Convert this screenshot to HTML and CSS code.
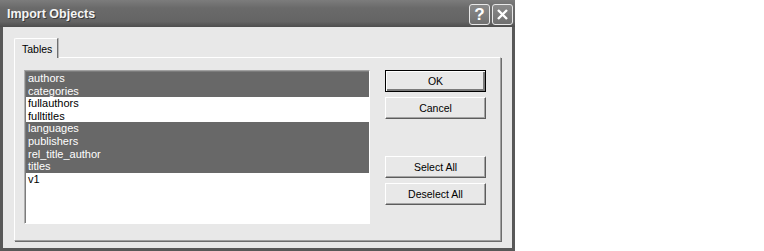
FILE: index.html
```html
<!doctype html>
<html lang="en">

<head>
	<meta charset="UTF-8">
	<title>Import Objects</title>
	<link rel="stylesheet" href="styles.css">
</head>

<body>
	<div class="dialog">
		<div class="titlebar">
			<span class="title">Import Objects</span>
			<div class="caption-btns">
				<span class="cbtn help">?</span>
				<span class="cbtn close">
					<svg width="21" height="21" viewBox="0 0 21 21">
						<path d="M6 6 L15 15 M15 6 L6 15" stroke="#fff" stroke-width="2.4" fill="none" />
					</svg>
				</span>
			</div>
		</div>
		<div class="content">
			<div class="tabs">
				<div class="tab">Tables</div>
			</div>
			<div class="panel">
				<ul class="list">
					<li class="sel">authors</li>
					<li class="sel">categories</li>
					<li>fullauthors</li>
					<li>fulltitles</li>
					<li class="sel">languages</li>
					<li class="sel">publishers</li>
					<li class="sel">rel_title_author</li>
					<li class="sel">titles</li>
					<li>v1</li>
				</ul>
				<div class="actions">
					<button class="btn default">OK</button>
					<button class="btn">Cancel</button>
					<button class="btn spaced">Select All</button>
					<button class="btn">Deselect All</button>
				</div>
			</div>
		</div>
	</div>
</body>

</html>
```

FILE: styles.css
```css
html,
body {
	margin: 0;
	padding: 0;
	background: #fff;
	font-family: "Liberation Sans", Arial, sans-serif;
}

.dialog {
	width: 515px;
	height: 251px;
	box-sizing: border-box;
	background: #e8e8e8;
	border: 3px solid #585858;
	border-top: 0;
	display: flex;
	flex-direction: column;
}

.titlebar {
	margin: 0 -3px;
	height: 27px;
	display: flex;
	justify-content: space-between;
	align-items: flex-start;
	background: linear-gradient(#7c7c7c, #6a6a6a 30%, #646464 80%, #4e4e4e);
}

.title {
	padding: 7px 0 0 7px;
	font-size: 12.5px;
	font-weight: bold;
	color: #f4f4f4;
	text-shadow: 1px 1px 0 #3a3a3a;
}

.caption-btns {
	display: flex;
	gap: 2px;
	padding: 4px 2px 0 0;
}

.cbtn {
	width: 21px;
	height: 21px;
	box-sizing: border-box;
	border: 1px solid #e8e8e8;
	border-radius: 3px;
	background: linear-gradient(#8a8a8a, #707070);
	display: flex;
	align-items: center;
	justify-content: center;
	color: #fff;
}

.cbtn svg {
	margin: -1px;
}

.help {
	font-size: 17px;
	font-weight: bold;
	line-height: 19px;
}

.content {
	flex: 1;
	padding: 11px 11px 0 11px;
}

.tabs {
	display: flex;
	height: 19px;
}

.tab {
	width: 44px;
	box-sizing: border-box;
	height: 20px;
	padding: 4px 0 0 7px;
	font-size: 10.5px;
	background: #e8e8e8;
	border-top: 1px solid #fff;
	border-left: 1px solid #fff;
	border-right: 1px solid #707070;
	border-top-left-radius: 2px;
	box-shadow: 1px 0 0 #b8b8b8;
	position: relative;
	z-index: 1;
}

.panel {
	width: 487px;
	height: 184px;
	box-sizing: border-box;
	border-top: 1px solid #fff;
	border-left: 1px solid #fff;
	border-right: 1px solid #a0a0a0;
	border-bottom: 1px solid #a0a0a0;
	box-shadow: 1px 1px 0 #6c6c6c;
	padding: 12px 0 0 9px;
	display: flex;
	gap: 15px;
}

.list {
	margin: 0;
	padding: 1px 0 0 0;
	list-style: none;
	width: 346px;
	height: 154px;
	box-sizing: border-box;
	background: #fff;
	border-top: 1px solid #a0a0a0;
	border-left: 1px solid #b0b0b0;
	border-right: 1px solid #fff;
	border-bottom: 1px solid #fff;
	box-shadow: inset 1px 1px 0 #7c7c7c;
}

.list li {
	height: 12.6px;
	line-height: 12.6px;
	padding-left: 2px;
	margin-left: 1px;
	font-size: 11px;
	color: #000;
}

.list li.sel {
	background: #686868;
	color: #fff;
}

.actions {
	display: flex;
	flex-direction: column;
	gap: 5px;
}

.btn {
	width: 101px;
	height: 22px;
	margin: 0;
	padding: 0;
	box-sizing: border-box;
	font-family: "Liberation Sans", Arial, sans-serif;
	font-size: 10.5px;
	color: #000;
	background: #e8e8e8;
	border: 1px solid;
	border-color: #fff #5c5c5c #5c5c5c #fff;
	box-shadow: inset -1px -1px 0 #a4a4a4;
}

.btn.default {
	border: 1px solid #000;
	box-shadow: inset 1px 1px 0 #fff, inset -2px -2px 0 #7a7a7a;
}

.btn.spaced {
	margin-top: 32px;
}
```
